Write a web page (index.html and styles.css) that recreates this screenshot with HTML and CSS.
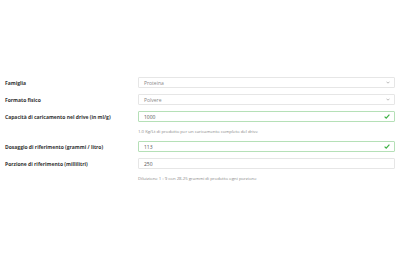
FILE: index.html
```html
<!DOCTYPE html>
<html lang="it">
<head>
    <meta charset="UTF-8">
    <meta name="viewport" content="width=device-width, initial-scale=1.0">
    <link rel="stylesheet" href="styles.css">
    <title>Prodotto</title>
</head>
<body>

    <form class="product-form">

        <!-- Famiglia -->
        <div class="row">
            <label class="field-label">Famiglia</label>
            <div class="box select-box">
                <span class="value muted">Proteina</span>
                <svg class="chevron" width="4" height="3" viewBox="0 0 4 3"><path d="M0.5 0.7 L2 2.2 L3.5 0.7" fill="none" stroke="#aaa" stroke-width="0.8"/></svg>
            </div>
        </div>

        <!-- Formato fisico -->
        <div class="row">
            <label class="field-label">Formato fisico</label>
            <div class="box select-box">
                <span class="value muted">Polvere</span>
                <svg class="chevron" width="4" height="3" viewBox="0 0 4 3"><path d="M0.5 0.7 L2 2.2 L3.5 0.7" fill="none" stroke="#aaa" stroke-width="0.8"/></svg>
            </div>
        </div>

        <!-- Capacità -->
        <div class="row">
            <label class="field-label">Capacità di caricamento nel drive (in ml/g)</label>
            <div class="box valid">
                <span class="value">1000</span>
                <svg class="check" width="6" height="5" viewBox="0 0 6 5"><path d="M0.6 2.6 L2.2 4.1 L5.4 0.7" fill="none" stroke="#3cb043" stroke-width="1.2"/></svg>
            </div>
        </div>
        <div class="help">1.0 Kg/Lt di prodotto per un caricamento completo del drive</div>

        <!-- Dosaggio -->
        <div class="row">
            <label class="field-label">Dosaggio di riferimento (grammi / litro)</label>
            <div class="box valid">
                <span class="value">113</span>
                <svg class="check" width="6" height="5" viewBox="0 0 6 5"><path d="M0.6 2.6 L2.2 4.1 L5.4 0.7" fill="none" stroke="#3cb043" stroke-width="1.2"/></svg>
            </div>
        </div>

        <!-- Porzione -->
        <div class="row">
            <label class="field-label">Porzione di riferimento (millilitri)</label>
            <div class="box">
                <span class="value">250</span>
            </div>
        </div>
        <div class="help">Diluizione 1 : 9 con 28.25 grammi di prodotto ogni porzione</div>

    </form>

</body>
</html>
```

FILE: styles.css
```css
body {
    margin: 0;
    background: #fff;
    font-family: "Open Sans", "Liberation Sans", sans-serif;
}

.product-form {
    padding: 77px 5px 0 5px;
}

.row {
    display: flex;
    align-items: center;
    margin-bottom: 6px;
}

.field-label {
    width: 133px;
    flex-shrink: 0;
    font-size: 5px;
    font-weight: 700;
    color: #333;
}

.box {
    flex: 1;
    height: 11px;
    box-sizing: border-box;
    border: 1px solid #e6e6e6;
    border-radius: 1px;
    display: flex;
    align-items: center;
    justify-content: space-between;
    padding: 0 4px 0 5px;
}

.box.valid {
    border-color: #b5e0b7;
}

.value {
    font-size: 5px;
    color: #555;
}

.value.muted {
    color: #888;
}

.chevron {
    display: block;
}

.check {
    display: block;
}

/* testo di aiuto sotto i campi */
.help {
    margin: 0 0 7px 133px;
    font-size: 4.3px;
    line-height: 6px;
    color: #888;
}
```
